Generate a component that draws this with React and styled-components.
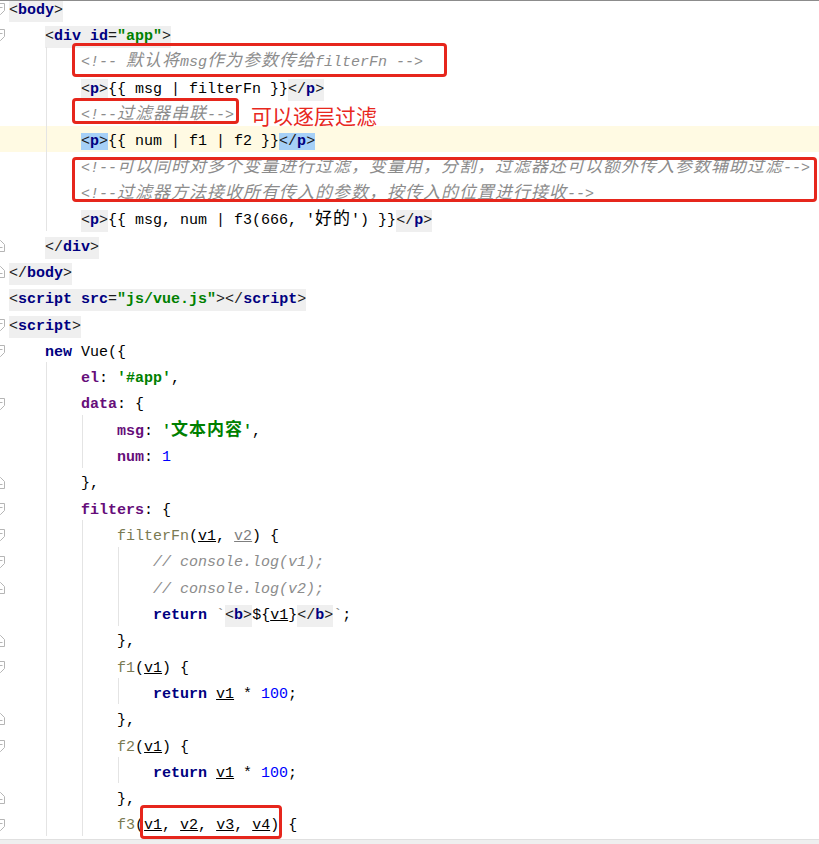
import React from 'react';
import styled, { createGlobalStyle, css } from 'styled-components';

const LINE = 26.32;
const CH = 9;
const LEFT = 9;

const GlobalStyle = createGlobalStyle`
  html, body {
    margin: 0;
    padding: 0;
    background: #fff;
  }
  body {
    font-family: 'Liberation Mono', 'Noto Sans CJK SC', monospace;
  }
`;

const Window = styled.div`
  position: relative;
  width: 819px;
  height: 844px;
  overflow: hidden;
  display: flex;
  flex-direction: column;
  background: #fff;
`;

const TopRule = styled.div`
  position: relative;
  z-index: 2;
  flex: none;
  height: 1px;
  background: #8c8c8c;
`;

const Code = styled.div`
  flex: 1;
  min-height: 0;
  margin-top: -7px;
`;

const BottomBar = styled.div`
  position: relative;
  z-index: 2;
  flex: none;
  height: 4px;
  background: #efefef;
  border-top: 1px solid #e0e0e0;
`;

const Line = styled.div`
  position: relative;
  height: ${LINE}px;
  box-sizing: border-box;
  padding: 3.8px 0 0 ${LEFT}px;
  line-height: ${LINE}px;
  font-size: 15px;
  white-space: pre;
  color: #000;
  background: ${({ $current }) => ($current ? '#fffae3' : 'transparent')};
`;

const Guide = styled.span`
  position: absolute;
  top: 0;
  bottom: 0;
  left: ${({ $col }) => LEFT + $col * CH + 1}px;
  width: 1px;
  background: #e4e4e4;
`;

const kindStyles = {
  br: css`color: #1a1a1a;`,
  tag: css`color: #000080; font-weight: 700;`,
  attr: css`color: #000080; font-weight: 700;`,
  val: css`color: #008000; font-weight: 700;`,
  txt: css`color: #000;`,
  cm: css`color: #8c8c8c; font-style: italic;`,
  kw: css`color: #000080; font-weight: 700;`,
  prop: css`color: #660e7a; font-weight: 700;`,
  str: css`color: #008000; font-weight: 700;`,
  num: css`color: #0000ff;`,
  fn: css`color: #7a7a52;`,
  par: css`color: #000; text-decoration: underline;`,
  unused: css`color: #7f7f7f; text-decoration: underline;`,
  tpl: css`color: #8c8c8c;`,
};

const Token = styled.span`
  ${({ $kind }) => kindStyles[$kind]}
`;

const TagBg = styled.span`
  background: ${({ $match }) => ($match ? '#a6d0f7' : '#efefef')};
  padding: ${({ $match }) => ($match ? '0' : '2px 0 3px')};
`;

const Cjk = styled.span`
  font-family: 'Noto Sans CJK SC', sans-serif;
  font-size: 17px;
  letter-spacing: 1px;
  line-height: 1;
`;

const FoldMark = styled.svg`
  position: absolute;
  left: -4px;
  top: 9px;
  width: 9px;
  height: 12px;
`;

const Mark = styled.div`
  position: absolute;
  z-index: 3;
  left: ${({ $x }) => $x}px;
  top: ${({ $y }) => $y}px;
  width: ${({ $w }) => $w}px;
  height: ${({ $h }) => $h}px;
  box-sizing: border-box;
  border: 3px solid #e6261c;
  border-radius: 4px;
`;

const Note = styled.div`
  position: absolute;
  z-index: 3;
  left: 251px;
  top: 102px;
  font-family: 'Noto Sans CJK SC', sans-serif;
  font-size: 21px;
  line-height: 26px;
  color: #e8281e;
`;

const cjkRe = /([\u3000-\u303f\u4e00-\u9fff\uff00-\uffef]+)/;

const renderText = (s) =>
  s
    .split(cjkRe)
    .filter(Boolean)
    .map((part, i) => (cjkRe.test(part) ? <Cjk key={i}>{part}</Cjk> : part));

const t = (kind, text) => ({ kind, text });
const box = (parts, match = false) => ({ box: true, match, parts });
const open = (name, match) => box([t('br', '<'), t('tag', name), t('br', '>')], match);
const close = (name, match) => box([t('br', '</'), t('tag', name), t('br', '>')], match);

const lines = [
  { ind: 0, fold: 'start', parts: [open('body')] },
  {
    ind: 4,
    fold: 'start',
    parts: [
      box([
        t('br', '<'),
        t('tag', 'div'),
        t('txt', ' '),
        t('attr', 'id'),
        t('br', '='),
        t('val', '"app"'),
        t('br', '>'),
      ]),
    ],
  },
  { ind: 8, guides: [4], parts: [t('cm', '<!-- 默认将msg作为参数传给filterFn -->')] },
  { ind: 8, guides: [4], parts: [open('p'), t('txt', '{{ msg | filterFn }}'), close('p')] },
  { ind: 8, guides: [4], parts: [t('cm', '<!--过滤器串联-->')] },
  {
    ind: 8,
    guides: [4],
    current: true,
    parts: [open('p', true), t('txt', '{{ num | f1 | f2 }}'), close('p', true)],
  },
  {
    ind: 8,
    guides: [4],
    parts: [t('cm', '<!--可以同时对多个变量进行过滤，变量用，分割，过滤器还可以额外传入参数辅助过滤-->')],
  },
  { ind: 8, guides: [4], parts: [t('cm', '<!--过滤器方法接收所有传入的参数，按传入的位置进行接收-->')] },
  { ind: 8, guides: [4], parts: [open('p'), t('txt', "{{ msg, num | f3(666, '好的') }}"), close('p')] },
  { ind: 4, fold: 'end', parts: [close('div')] },
  { ind: 0, fold: 'end', parts: [close('body')] },
  {
    ind: 0,
    parts: [
      box([
        t('br', '<'),
        t('tag', 'script'),
        t('txt', ' '),
        t('attr', 'src'),
        t('br', '='),
        t('val', '"js/vue.js"'),
        t('br', '></'),
        t('tag', 'script'),
        t('br', '>'),
      ]),
    ],
  },
  { ind: 0, fold: 'start', parts: [open('script')] },
  { ind: 4, fold: 'start', parts: [t('kw', 'new'), t('txt', ' Vue({')] },
  { ind: 8, guides: [4], parts: [t('prop', 'el'), t('txt', ': '), t('str', "'#app'"), t('txt', ',')] },
  { ind: 8, guides: [4], fold: 'start', parts: [t('prop', 'data'), t('txt', ': {')] },
  { ind: 12, guides: [4, 8], parts: [t('prop', 'msg'), t('txt', ': '), t('str', "'文本内容'"), t('txt', ',')] },
  { ind: 12, guides: [4, 8], parts: [t('prop', 'num'), t('txt', ': '), t('num', '1')] },
  { ind: 8, guides: [4], fold: 'end', parts: [t('txt', '},')] },
  { ind: 8, guides: [4], fold: 'start', parts: [t('prop', 'filters'), t('txt', ': {')] },
  {
    ind: 12,
    guides: [4, 8],
    fold: 'start',
    parts: [
      t('fn', 'filterFn'),
      t('txt', '('),
      t('par', 'v1'),
      t('txt', ', '),
      t('unused', 'v2'),
      t('txt', ') {'),
    ],
  },
  { ind: 16, guides: [4, 8, 12], fold: 'start', parts: [t('cm', '// console.log(v1);')] },
  { ind: 16, guides: [4, 8, 12], fold: 'end', parts: [t('cm', '// console.log(v2);')] },
  {
    ind: 16,
    guides: [4, 8, 12],
    parts: [
      t('kw', 'return'),
      t('txt', ' '),
      t('tpl', '`'),
      open('b'),
      t('txt', '${'),
      t('par', 'v1'),
      t('txt', '}'),
      close('b'),
      t('tpl', '`'),
      t('txt', ';'),
    ],
  },
  { ind: 12, guides: [4, 8], fold: 'end', parts: [t('txt', '},')] },
  { ind: 12, guides: [4, 8], fold: 'start', parts: [t('fn', 'f1'), t('txt', '('), t('par', 'v1'), t('txt', ') {')] },
  {
    ind: 16,
    guides: [4, 8, 12],
    parts: [t('kw', 'return'), t('txt', ' '), t('par', 'v1'), t('txt', ' * '), t('num', '100'), t('txt', ';')],
  },
  { ind: 12, guides: [4, 8], fold: 'end', parts: [t('txt', '},')] },
  { ind: 12, guides: [4, 8], fold: 'start', parts: [t('fn', 'f2'), t('txt', '('), t('par', 'v1'), t('txt', ') {')] },
  {
    ind: 16,
    guides: [4, 8, 12],
    parts: [t('kw', 'return'), t('txt', ' '), t('par', 'v1'), t('txt', ' * '), t('num', '100'), t('txt', ';')],
  },
  { ind: 12, guides: [4, 8], fold: 'end', parts: [t('txt', '},')] },
  {
    ind: 12,
    guides: [4, 8],
    fold: 'start',
    parts: [
      t('fn', 'f3'),
      t('txt', '('),
      t('par', 'v1'),
      t('txt', ', '),
      t('par', 'v2'),
      t('txt', ', '),
      t('par', 'v3'),
      t('txt', ', '),
      t('par', 'v4'),
      t('txt', ') {'),
    ],
  },
];

const marks = [
  { x: 72, y: 43, w: 375, h: 34 },
  { x: 72, y: 98, w: 167, h: 26 },
  { x: 72, y: 157, w: 745, h: 45 },
  { x: 140, y: 805, w: 142, h: 34 },
];

const Fold = ({ type }) => (
  <FoldMark viewBox="0 0 9 12">
    {type === 'start' ? (
      <path d="M0.5 0.5H8.5V7.5L4.5 11.5L0.5 7.5Z" fill="#fff" stroke="#b5b5b5" />
    ) : (
      <path d="M0.5 11.5H8.5V4.5L4.5 0.5L0.5 4.5Z" fill="#fff" stroke="#b5b5b5" />
    )}
    <path d={type === 'start' ? 'M2.5 4.5H6.5' : 'M2.5 7.5H6.5'} stroke="#b5b5b5" />
  </FoldMark>
);

const renderPart = (p, i) =>
  p.box ? (
    <TagBg key={i} $match={p.match}>
      {p.parts.map(renderPart)}
    </TagBg>
  ) : (
    <Token key={i} $kind={p.kind}>
      {renderText(p.text)}
    </Token>
  );

const App = () => (
  <>
    <GlobalStyle />
    <Window>
      <TopRule />
      <Code>
        {lines.map((line, i) => (
          <Line key={i} $current={line.current}>
            {(line.guides || []).map((c) => (
              <Guide key={c} $col={c} />
            ))}
            {line.fold && <Fold type={line.fold} />}
            {' '.repeat(line.ind)}
            {line.parts.map(renderPart)}
          </Line>
        ))}
      </Code>
      <BottomBar />
      {marks.map((m, i) => (
        <Mark key={i} $x={m.x} $y={m.y} $w={m.w} $h={m.h} />
      ))}
      <Note>可以逐层过滤</Note>
    </Window>
  </>
);

export default App;
